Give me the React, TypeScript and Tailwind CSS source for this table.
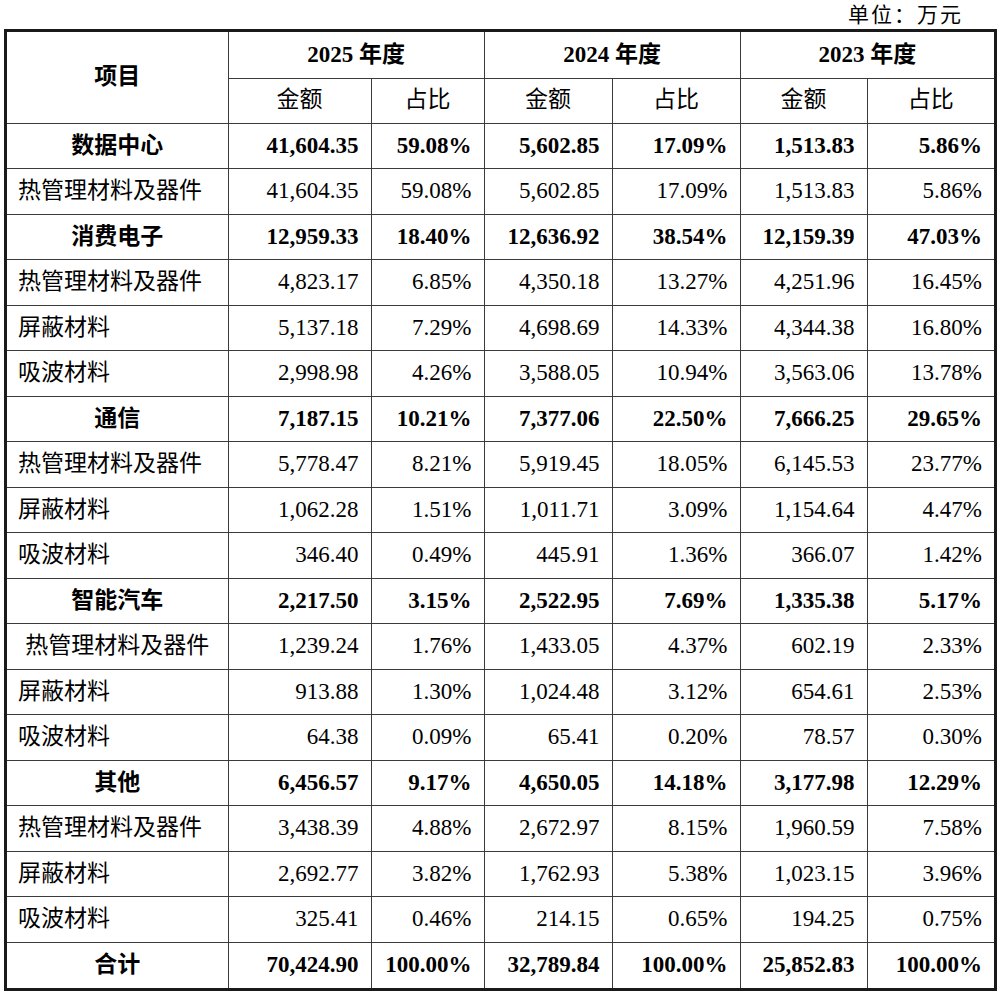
type Row = {
  name: string;
  cells: string[];
  kind: "cat" | "sub" | "subc" | "total";
};

const rows: Row[] = [
  { name: "数据中心", kind: "cat", cells: ["41,604.35", "59.08%", "5,602.85", "17.09%", "1,513.83", "5.86%"] },
  { name: "热管理材料及器件", kind: "sub", cells: ["41,604.35", "59.08%", "5,602.85", "17.09%", "1,513.83", "5.86%"] },
  { name: "消费电子", kind: "cat", cells: ["12,959.33", "18.40%", "12,636.92", "38.54%", "12,159.39", "47.03%"] },
  { name: "热管理材料及器件", kind: "sub", cells: ["4,823.17", "6.85%", "4,350.18", "13.27%", "4,251.96", "16.45%"] },
  { name: "屏蔽材料", kind: "sub", cells: ["5,137.18", "7.29%", "4,698.69", "14.33%", "4,344.38", "16.80%"] },
  { name: "吸波材料", kind: "sub", cells: ["2,998.98", "4.26%", "3,588.05", "10.94%", "3,563.06", "13.78%"] },
  { name: "通信", kind: "cat", cells: ["7,187.15", "10.21%", "7,377.06", "22.50%", "7,666.25", "29.65%"] },
  { name: "热管理材料及器件", kind: "sub", cells: ["5,778.47", "8.21%", "5,919.45", "18.05%", "6,145.53", "23.77%"] },
  { name: "屏蔽材料", kind: "sub", cells: ["1,062.28", "1.51%", "1,011.71", "3.09%", "1,154.64", "4.47%"] },
  { name: "吸波材料", kind: "sub", cells: ["346.40", "0.49%", "445.91", "1.36%", "366.07", "1.42%"] },
  { name: "智能汽车", kind: "cat", cells: ["2,217.50", "3.15%", "2,522.95", "7.69%", "1,335.38", "5.17%"] },
  { name: "热管理材料及器件", kind: "subc", cells: ["1,239.24", "1.76%", "1,433.05", "4.37%", "602.19", "2.33%"] },
  { name: "屏蔽材料", kind: "sub", cells: ["913.88", "1.30%", "1,024.48", "3.12%", "654.61", "2.53%"] },
  { name: "吸波材料", kind: "sub", cells: ["64.38", "0.09%", "65.41", "0.20%", "78.57", "0.30%"] },
  { name: "其他", kind: "cat", cells: ["6,456.57", "9.17%", "4,650.05", "14.18%", "3,177.98", "12.29%"] },
  { name: "热管理材料及器件", kind: "sub", cells: ["3,438.39", "4.88%", "2,672.97", "8.15%", "1,960.59", "7.58%"] },
  { name: "屏蔽材料", kind: "sub", cells: ["2,692.77", "3.82%", "1,762.93", "5.38%", "1,023.15", "3.96%"] },
  { name: "吸波材料", kind: "sub", cells: ["325.41", "0.46%", "214.15", "0.65%", "194.25", "0.75%"] },
  { name: "合计", kind: "total", cells: ["70,424.90", "100.00%", "32,789.84", "100.00%", "25,852.83", "100.00%"] },
];

const years = ["2025", "2024", "2023"];

const cellLine = "border border-[#3a3a3a]";

export default function App() {
  return (
    <div className="w-[1000px] h-[995px] bg-white text-black font-['Liberation_Serif','Noto_Sans_CJK_SC',serif] text-[23px]">
      <div className="h-[29px] pr-[37px] flex items-center justify-end text-[21px] tracking-[2px] leading-none pt-[2px]">
        单位：万元
      </div>
      <div className="ml-[4px] w-[993px] border-[3px] border-[#1a1a1a]">
        <table className="w-full table-fixed border-collapse border-hidden">
          <colgroup>
            <col className="w-[221px]" />
            <col className="w-[143px]" />
            <col className="w-[113px]" />
            <col className="w-[128px]" />
            <col className="w-[128px]" />
            <col className="w-[127px]" />
            <col />
          </colgroup>
          <thead>
            <tr className="h-[46px]">
              <th rowSpan={2} className={`${cellLine} font-bold text-center`}>
                项目
              </th>
              {years.map((y) => (
                <th key={y} colSpan={2} className={`${cellLine} font-bold text-center`}>
                  {y} 年度
                </th>
              ))}
            </tr>
            <tr className="h-[45px]">
              {years.map((y) => [
                <th key={y + "a"} className={`${cellLine} font-normal text-center`}>
                  金额
                </th>,
                <th key={y + "b"} className={`${cellLine} font-normal text-center`}>
                  占比
                </th>,
              ])}
            </tr>
          </thead>
          <tbody>
            {rows.map((r, i) => {
              const bold = r.kind === "cat" || r.kind === "total";
              const centered = r.kind !== "sub";
              return (
                <tr key={i} className="h-[45.5px]">
                  <td
                    className={`${cellLine} whitespace-nowrap ${bold ? "font-bold" : ""} ${
                      centered ? "text-center" : "text-left pl-[11px]"
                    }`}
                  >
                    {r.name}
                  </td>
                  {r.cells.map((c, j) => (
                    <td
                      key={j}
                      className={`${cellLine} text-right pr-[12px] whitespace-nowrap ${bold ? "font-bold" : ""}`}
                    >
                      {c}
                    </td>
                  ))}
                </tr>
              );
            })}
          </tbody>
        </table>
      </div>
    </div>
  );
}
